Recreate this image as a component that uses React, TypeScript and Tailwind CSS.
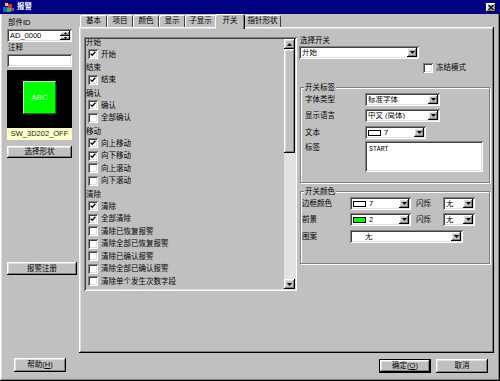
import React from 'react';

const RAISED =
  'shadow-[inset_-1px_-1px_0_#000000,inset_1px_1px_0_#ffffff,inset_-2px_-2px_0_#808080,inset_2px_2px_0_#dfdfdf]';
const SUNKEN =
  'shadow-[inset_1px_1px_0_#808080,inset_-1px_-1px_0_#ffffff,inset_2px_2px_0_#404040,inset_-2px_-2px_0_#dfdfdf]';

type Item = { label: string; checked?: boolean };
type Group = { title: string; items: Item[] };

const GROUPS: Group[] = [
  { title: '开始', items: [{ label: '开始', checked: true }] },
  { title: '结束', items: [{ label: '结束', checked: true }] },
  { title: '确认', items: [{ label: '确认', checked: true }, { label: '全部确认' }] },
  {
    title: '移动',
    items: [
      { label: '向上移动', checked: true },
      { label: '向下移动', checked: true },
      { label: '向上滚动' },
      { label: '向下滚动' },
    ],
  },
  {
    title: '清除',
    items: [
      { label: '清除', checked: true },
      { label: '全部清除', checked: true },
      { label: '清除已恢复报警' },
      { label: '清除全部已恢复报警' },
      { label: '清除已确认报警' },
      { label: '清除全部已确认报警' },
      { label: '清除单个发生次数字段' },
      { label: '清除全部发生次数字段' },
    ],
  },
];

const TABS = [
  { label: '基本', cls: 'w-[27px]' },
  { label: '项目', cls: 'w-[26px]' },
  { label: '颜色', cls: 'w-[26px]' },
  { label: '显示', cls: 'w-[26px]' },
  { label: '子显示', cls: 'w-[31px]' },
  { label: '开关', cls: 'w-[30px]', active: true },
  { label: '指针形状', cls: 'w-[37px]' },
];

const CheckBox = ({ checked }: { checked?: boolean }) => (
  <span className={`w-[10px] h-[10px] bg-white shrink-0 flex items-center justify-center ${SUNKEN}`}>
    {checked && (
      <svg width="6" height="6" viewBox="0 0 6 6">
        <path d="M0.6 2.6 L2.2 4.3 L5.4 0.8" stroke="#000" strokeWidth="1.3" fill="none" />
      </svg>
    )}
  </span>
);

const Arrow = ({ up }: { up?: boolean }) => (
  <svg width="5" height="3" viewBox="0 0 5 3">
    <path d={up ? 'M0 3H5L2.5 0Z' : 'M0 0H5L2.5 3Z'} fill="#000" />
  </svg>
);

const DropBtn = () => (
  <span className={`w-[10px] h-[9px] bg-[#c0c0c0] flex items-center justify-center shrink-0 ${RAISED}`}>
    <Arrow />
  </span>
);

function Combo({ className, children }: { className: string; children?: React.ReactNode }) {
  return (
    <div className={`h-[13px] bg-white flex items-center p-[2px] shrink-0 ${SUNKEN} ${className}`}>
      <div className="flex-1 flex items-center min-w-0 pl-[1px] overflow-hidden whitespace-nowrap">{children}</div>
      <DropBtn />
    </div>
  );
}

function Btn({ className, children }: { className: string; children: React.ReactNode }) {
  return (
    <div className={`flex items-center justify-center bg-[#c0c0c0] shrink-0 ${RAISED} ${className}`}>{children}</div>
  );
}

const Swatch = ({ color }: { color: string }) => (
  <span className={`w-[13px] h-[6px] border border-black mr-[3px] shrink-0 ${color}`} />
);

export default function App() {
  return (
    <div
      className={`w-[500px] h-[381px] bg-[#c0c0c0] flex flex-col overflow-hidden text-black text-[7.5px] leading-none font-['Liberation_Sans','Noto_Sans_CJK_SC',sans-serif] ${RAISED}`}
    >
      {/* title bar */}
      <div className="h-[14px] bg-[#000080] flex items-center justify-between pl-[3px] pr-[4px] shrink-0">
        <div className="flex items-center gap-[3px] text-white font-bold">
          <svg width="11" height="11" viewBox="0 0 11 11">
            <rect x="0" y="5" width="5" height="5" fill="#2060e0" />
            <rect x="5" y="2" width="4" height="4" fill="#e03030" />
            <rect x="4" y="6" width="4" height="4" fill="#30c030" />
            <rect x="2" y="1" width="3" height="3" fill="#f0d020" />
            <rect x="8" y="6" width="3" height="3" fill="#9040c0" />
          </svg>
          <span>报警</span>
        </div>
        <div className={`w-[10px] h-[9px] bg-[#c0c0c0] flex items-center justify-center ${RAISED}`}>
          <svg width="6" height="5" viewBox="0 0 6 5">
            <path d="M0.5 0 L5.5 5 M5.5 0 L0.5 5" stroke="#000" strokeWidth="1.3" />
          </svg>
        </div>
      </div>

      <div className="flex h-[365px]">
        {/* left column */}
        <div className="w-[79px] flex flex-col pl-[7px]">
          <div className="mt-[3px] h-[12px] flex items-center pl-[1px]">部件ID</div>
          <div className={`w-[65px] h-[13px] bg-white flex items-center p-[2px] ${SUNKEN}`}>
            <span className="flex-1 pl-[1px]">AD_0000</span>
            <div className="flex flex-col w-[10px] h-[9px]">
              <span className={`h-[4.5px] bg-[#c0c0c0] flex items-center justify-center ${RAISED}`}>
                <svg width="3" height="2" viewBox="0 0 3 2"><path d="M0 2H3L1.5 0Z" fill="#000" /></svg>
              </span>
              <span className={`h-[4.5px] bg-[#c0c0c0] flex items-center justify-center ${RAISED}`}>
                <svg width="3" height="2" viewBox="0 0 3 2"><path d="M0 0H3L1.5 2Z" fill="#000" /></svg>
              </span>
            </div>
          </div>
          <div className="h-[12px] flex items-center pl-[1px]">注释</div>
          <div className={`w-[65px] h-[13px] bg-white ${SUNKEN}`} />
          <div className="mt-[3px] w-[65px] h-[58px] bg-black flex items-center justify-center pb-[3px]">
            <div className="w-[33px] h-[33px] bg-[#00ff00] border-t border-l border-[#d8d8d8] border-r-[#008000] border-b-[#008000] border-r border-b flex items-center justify-center text-[#e0ffe0] text-[8px]">
              ABC
            </div>
          </div>
          <div className="w-[65px] h-[12px] bg-[#ffffc8] flex items-center justify-center text-[#202020]">
            SW_3D202_OFF
          </div>
          <Btn className="mt-[6px] w-[65px] h-[12px]">选择形状</Btn>
          <Btn className="mt-[104px] w-[70px] h-[13px]">报警注册</Btn>
          <Btn className="mt-auto mb-[7px] ml-[7px] w-[52px] h-[14px]">
            <span>
              帮助(<span className="underline">H</span>)
            </span>
          </Btn>
        </div>

        {/* right column */}
        <div className="w-[419px] flex flex-col">
          {/* tabs */}
          <div className="h-[13px] flex items-end pl-[1px] shrink-0">
            {TABS.map((t) =>
              t.active ? (
                <div
                  key={t.label}
                  className={`relative z-10 -ml-px -mr-px h-[15px] -mb-[2px] pb-[2px] bg-[#c0c0c0] rounded-t-[2px] flex items-center justify-center shadow-[inset_1px_1px_0_#ffffff,inset_-1px_0_0_#000000,inset_-2px_0_0_#808080] ${t.cls}`}
                >
                  {t.label}
                </div>
              ) : (
                <div
                  key={t.label}
                  className={`h-[12px] rounded-t-[2px] flex items-center justify-center shadow-[inset_1px_1px_0_#ffffff,inset_-1px_0_0_#404040] ${t.cls}`}
                >
                  {t.label}
                </div>
              ),
            )}
          </div>

          {/* panel */}
          <div className={`w-[415px] h-[326px] flex pt-[8px] pl-[5px] shrink-0 ${RAISED}`}>
            {/* check list */}
            <div className={`mt-[2px] w-[213px] h-[254px] p-[2px] flex shrink-0 ${SUNKEN}`}>
              <div className="flex-1 overflow-hidden">
                <div className="-mt-[2px] flex flex-col gap-[2px]">
                  {GROUPS.map((g) => (
                    <div key={g.title} className="flex flex-col">
                      <div className="h-[11px] flex items-center whitespace-nowrap">{g.title}</div>
                      {g.items.map((it) => (
                        <div key={it.label} className="h-[12.5px] flex items-center pl-[2px] gap-[3px] whitespace-nowrap">
                          <CheckBox checked={it.checked} />
                          <span>{it.label}</span>
                        </div>
                      ))}
                    </div>
                  ))}
                </div>
              </div>
              <div className="w-[11px] flex flex-col">
                <span className={`h-[10px] bg-[#c0c0c0] flex items-center justify-center ${RAISED}`}>
                  <Arrow up />
                </span>
                <span className={`h-[104px] bg-[#c0c0c0] ${RAISED}`} />
                <span className="flex-1 bg-[#e2e2e2]" />
                <span className={`h-[10px] bg-[#c0c0c0] flex items-center justify-center ${RAISED}`}>
                  <Arrow />
                </span>
              </div>
            </div>

            {/* switch settings */}
            <div className="ml-[2px] w-[191px] flex flex-col">
              <div className="h-[11px] flex items-center pl-[1px]">选择开关</div>
              <Combo className="w-[120px]">开始</Combo>
              <div className="mt-[3px] h-[12px] flex items-center pl-[124px] gap-[3px]">
                <CheckBox />
                <span>冻结模式</span>
              </div>

              <fieldset className="mt-[8px] ml-[1px] w-[190px] p-0 m-0 min-w-0 border border-[#808080] shadow-[1px_1px_0_#ffffff,inset_1px_1px_0_#ffffff]">
                <legend className="ml-[3px] px-[1px] h-[11px] leading-[11px] bg-[#c0c0c0]">开关标签</legend>
                <div className="flex flex-col pl-[4px] pb-[10px]">
                  <div className="h-[13px] flex items-center">
                    <span className="w-[60px]">字体类型</span>
                    <Combo className="w-[75px]">标准字体</Combo>
                  </div>
                  <div className="mt-[3px] h-[13px] flex items-center">
                    <span className="w-[60px]">显示语言</span>
                    <Combo className="w-[75px]">中文 (简体)</Combo>
                  </div>
                  <div className="mt-[4px] h-[13px] flex items-center">
                    <span className="w-[60px]">文本</span>
                    <Combo className="w-[61px]">
                      <Swatch color="bg-white" />
                      <span>7</span>
                    </Combo>
                  </div>
                  <div className="mt-[2px] flex items-start">
                    <span className="w-[60px] pt-[3px]">标签</span>
                    <div className={`w-[118px] h-[31px] bg-white p-[4px] ${SUNKEN}`}>
                      <span className="font-['Liberation_Mono',monospace] text-[6.5px]">START</span>
                    </div>
                  </div>
                </div>
              </fieldset>

              <fieldset className="mt-[3px] ml-[1px] w-[190px] p-0 m-0 min-w-0 border border-[#808080] shadow-[1px_1px_0_#ffffff,inset_1px_1px_0_#ffffff]">
                <legend className="ml-[3px] px-[1px] h-[11px] leading-[11px] bg-[#c0c0c0]">开关颜色</legend>
                <div className="flex flex-col pl-[1px] pb-[20px]">
                  <div className="h-[13px] flex items-center">
                    <span className="w-[48px]">边框颜色</span>
                    <Combo className="w-[61px]">
                      <Swatch color="bg-white" />
                      <span>7</span>
                    </Combo>
                    <span className="ml-[5px] w-[27px]">闪烁</span>
                    <Combo className="w-[32px]">无</Combo>
                  </div>
                  <div className="mt-[3px] h-[13px] flex items-center">
                    <span className="w-[48px]">前景</span>
                    <Combo className="w-[61px]">
                      <Swatch color="bg-[#00ff00]" />
                      <span>2</span>
                    </Combo>
                    <span className="ml-[5px] w-[27px]">闪烁</span>
                    <Combo className="w-[32px]">无</Combo>
                  </div>
                  <div className="mt-[4px] h-[13px] flex items-center">
                    <span className="w-[48px]">图案</span>
                    <Combo className="w-[113px]">
                      <span className="pl-[12px]">无</span>
                    </Combo>
                  </div>
                </div>
              </fieldset>
            </div>
          </div>

          {/* dialog buttons */}
          <div className="mt-[6px] flex justify-end gap-[5px] pr-[10px]">
            <div className="w-[52px] h-[14px] border border-black flex">
              <Btn className="flex-1 h-full">
                <span>
                  确定(<span className="underline">O</span>)
                </span>
              </Btn>
            </div>
            <Btn className="w-[52px] h-[14px]">取消</Btn>
          </div>
        </div>
      </div>
    </div>
  );
}
